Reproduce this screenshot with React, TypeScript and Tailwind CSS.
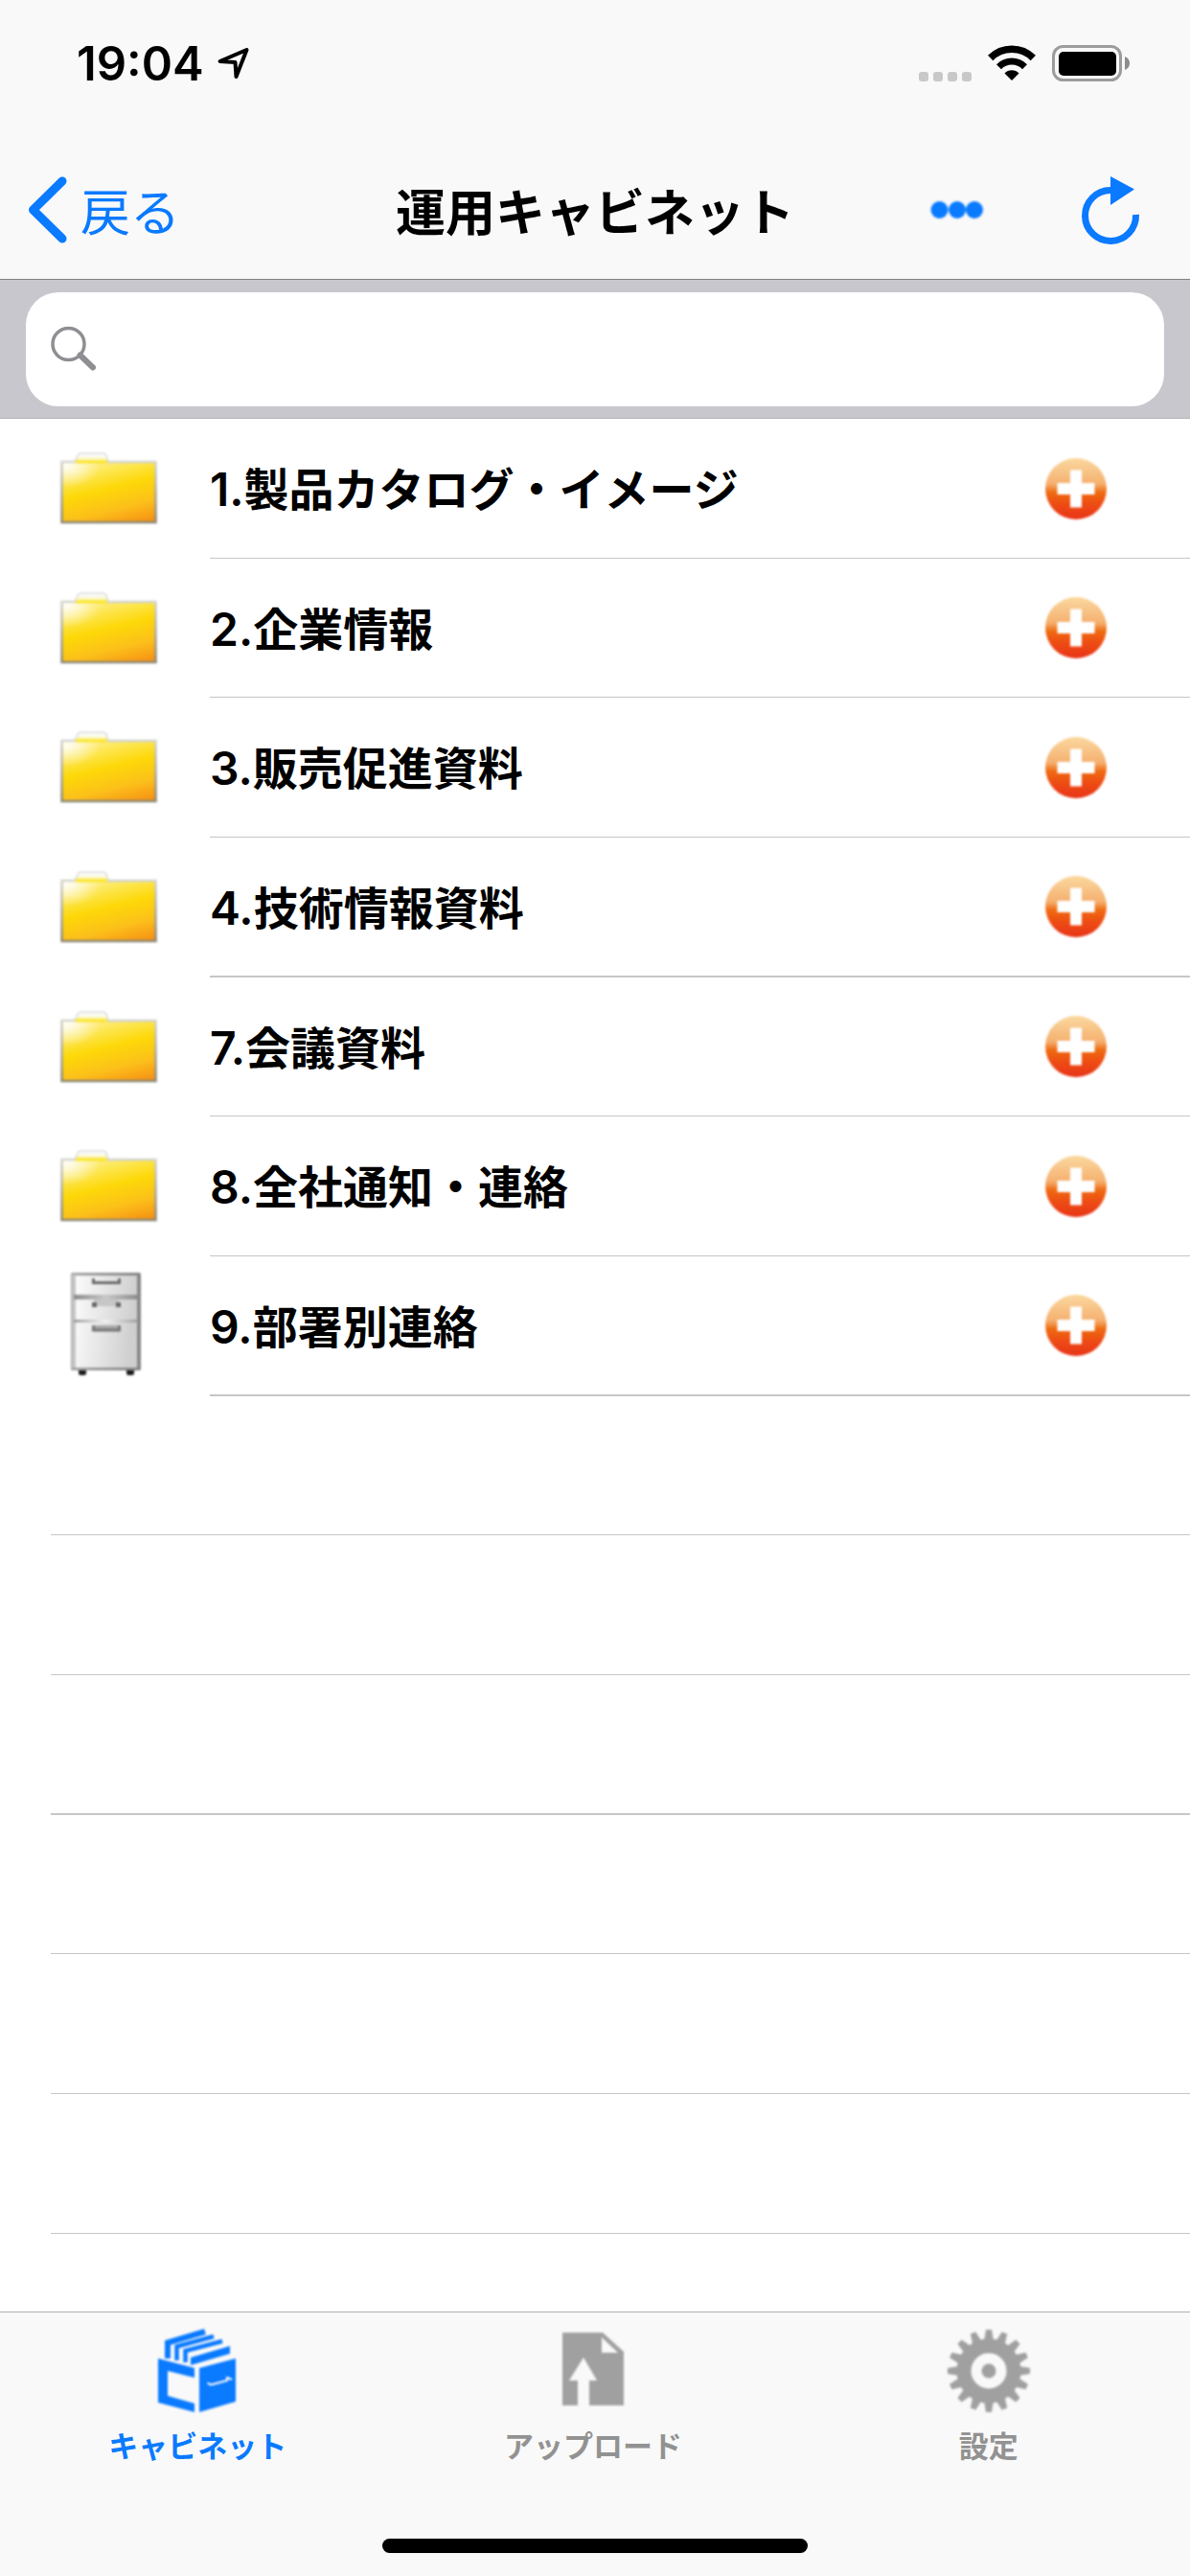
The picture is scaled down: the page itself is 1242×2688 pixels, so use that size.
import React from "react";

type Row = { no: string; name: string; kind: "folder" | "cabinet" };

const rows: Row[] = [
  { no: "1.", name: "製品カタログ・イメージ", kind: "folder" },
  { no: "2.", name: "企業情報", kind: "folder" },
  { no: "3.", name: "販売促進資料", kind: "folder" },
  { no: "4.", name: "技術情報資料", kind: "folder" },
  { no: "7.", name: "会議資料", kind: "folder" },
  { no: "8.", name: "全社通知・連絡", kind: "folder" },
  { no: "9.", name: "部署別連絡", kind: "cabinet" },
];

const emptyRows = [7, 8, 9, 10, 11, 12];

const rowHeight = (i: number) => (i % 3 === 1 ? "h-[145px]" : "h-[146px]");
const rowLine = (i: number) =>
  i > 0 && i < 12 && i % 3 === 0 ? "border-b-2 border-[#c6c6c6]" : "border-b border-[#c6c6c6]";

function Defs() {
  return (
    <svg width="0" height="0" className="absolute" aria-hidden="true">
      <defs>
        <linearGradient id="folderFill" x1="0.2" y1="0" x2="0.65" y2="1.15">
          <stop offset="0" stopColor="#fff09a" />
          <stop offset="0.2" stopColor="#fde650" />
          <stop offset="0.42" stopColor="#fdd808" />
          <stop offset="0.7" stopColor="#fcc01a" />
          <stop offset="1" stopColor="#f58a12" />
        </linearGradient>
        <radialGradient id="folderShine" cx="0.03" cy="0.05" r="0.38">
          <stop offset="0" stopColor="#fff" stopOpacity="0.9" />
          <stop offset="1" stopColor="#fff" stopOpacity="0" />
        </radialGradient>
        <linearGradient id="folderEdge" x1="0" y1="0" x2="0" y2="1">
          <stop offset="0" stopColor="#d4d4d0" />
          <stop offset="0.6" stopColor="#a8a498" />
          <stop offset="1" stopColor="#8c8878" />
        </linearGradient>
        <linearGradient id="folderTab" x1="0" y1="0" x2="0" y2="1">
          <stop offset="0.3" stopColor="#fbfbfb" />
          <stop offset="0.75" stopColor="#fdf6b0" />
          <stop offset="1" stopColor="#fde428" />
        </linearGradient>
        <linearGradient id="plusFill" x1="0" y1="0" x2="0" y2="1">
          <stop offset="0" stopColor="#fbd9a0" />
          <stop offset="0.42" stopColor="#f5b070" />
          <stop offset="0.56" stopColor="#ee6a10" />
          <stop offset="0.75" stopColor="#ee4c14" />
          <stop offset="1" stopColor="#e83418" />
        </linearGradient>
        <linearGradient id="drawer" x1="0" y1="0" x2="1" y2="0.15">
          <stop offset="0" stopColor="#fcfcfc" />
          <stop offset="1" stopColor="#cfcfcf" />
        </linearGradient>
        <linearGradient id="drawerGap" x1="0" y1="0" x2="1" y2="0">
          <stop offset="0" stopColor="#8c8c8c" />
          <stop offset="0.5" stopColor="#c8c8c8" />
          <stop offset="1" stopColor="#8c8c8c" />
        </linearGradient>
        <linearGradient id="drawerSeam" x1="0" y1="0" x2="1" y2="0">
          <stop offset="0" stopColor="#9c9c9c" />
          <stop offset="0.5" stopColor="#f4f4f4" />
          <stop offset="1" stopColor="#9c9c9c" />
        </linearGradient>
        <linearGradient id="cabinetEdge" x1="0" y1="0" x2="1" y2="0">
          <stop offset="0" stopColor="#a8a8a8" />
          <stop offset="1" stopColor="#858585" />
        </linearGradient>
      </defs>
    </svg>
  );
}

function FolderIcon() {
  return (
    <svg viewBox="0 0 110 120" className="h-[120px] w-[110px] blur-[1px]" aria-hidden="true">
      <path d="M23 32 L26 25 Q27 23 30 23 H52 Q55 23 56 25 L58 32 Z" fill="url(#folderTab)" stroke="#dcdcdc" strokeWidth="1.5" />
      <rect x="9.5" y="32" width="98" height="63" fill="url(#folderFill)" stroke="url(#folderEdge)" strokeWidth="2.5" />
      <rect x="11" y="33" width="95" height="60" fill="url(#folderShine)" />
      <path d="M24 32 H57" stroke="#fde82c" strokeWidth="3" />
    </svg>
  );
}

function CabinetIcon() {
  return (
    <svg viewBox="0 0 110 120" className="h-[120px] w-[110px] blur-[1px]" aria-hidden="true">
      <rect x="27" y="104" width="8" height="7" rx="2" fill="#1c1c1c" />
      <rect x="77" y="104" width="8" height="7" rx="2" fill="#1c1c1c" />
      <rect x="19" y="4" width="73" height="102" rx="1.5" fill="url(#cabinetEdge)" />
      <rect x="23" y="7" width="65" height="96" fill="url(#drawer)" />
      <rect x="20" y="6" width="4" height="97" fill="#c4c4c4" />
      <rect x="22" y="27" width="67" height="5" fill="url(#drawerGap)" />
      <rect x="22" y="53" width="67" height="3" fill="url(#drawerSeam)" />
      <path d="M42.500 10 V14.500 H69.500 V10" fill="none" stroke="#6c6c6c" strokeWidth="3" />
      <path d="M43 32 H69 V35 L65 39 H47 L43 35 Z" fill="#c6c6c6" />
      <rect x="41" y="35" width="5" height="5" fill="#666" />
      <rect x="66" y="35" width="5" height="5" fill="#666" />
      <path d="M42.500 59 V64 H69.500 V59" fill="#a8a8a8" stroke="#777" strokeWidth="3" />
    </svg>
  );
}

function PlusIcon() {
  return (
    <svg viewBox="0 0 72 72" className="size-[72px] blur-[1px]" aria-hidden="true">
      <circle cx="36" cy="36" r="32" fill="url(#plusFill)" />
      <path d="M30 16.500 H42 V30 H55.500 V42 H42 V55.500 H30 V42 H16.500 V30 H30 Z" fill="#fff" />
    </svg>
  );
}

function StatusBar() {
  return (
    <div className="flex h-[132px] items-center justify-between pr-[62px] pl-20">
      <div className="flex items-center gap-3.5">
        <span className="font-['Inter'] text-[49px] leading-none font-semibold">19:04</span>
        <svg viewBox="0 0 34 34" className="size-[34px]" aria-hidden="true">
          <path d="M2.500 15 L30.500 3 L19.500 31 L18.500 16 Z" fill="none" stroke="#000" strokeWidth="4" strokeLinejoin="round" />
        </svg>
      </div>
      <div className="flex items-end">
        <div className="mr-[17px] flex gap-[5px]" aria-hidden="true">
          <span className="size-2.5 rounded-[3px] bg-[#c8c8c8]" />
          <span className="size-2.5 rounded-[3px] bg-[#c8c8c8]" />
          <span className="size-2.5 rounded-[3px] bg-[#c8c8c8]" />
          <span className="size-2.5 rounded-[3px] bg-[#c8c8c8]" />
        </div>
        <svg viewBox="0 0 50 38" className="mr-[17px] h-[38px] w-[50px]" aria-hidden="true">
          <g fill="none" stroke="#000">
            <path d="M2.700 13.500 A31.500 31.500 0 0 1 47.300 13.500" strokeWidth="7.500" />
            <path d="M11.500 22.700 A19 19 0 0 1 38.500 22.700" strokeWidth="7" />
          </g>
          <path d="M25 37 L17.500 29.500 A10.500 10.500 0 0 1 32.500 29.500 Z" />
        </svg>
        <svg viewBox="0 0 82 38" className="h-[38px] w-[82px]" aria-hidden="true">
          <rect x="1.500" y="1.500" width="70" height="35" rx="10" fill="none" stroke="#9c9c9c" strokeWidth="3" />
          <rect x="7" y="7" width="60" height="25" rx="5" />
          <path d="M76 12 Q81 14 81 19 Q81 24 76 26 Z" fill="#8c8c8c" />
        </svg>
      </div>
    </div>
  );
}

function NavBar() {
  return (
    <header className="grid h-[160px] grid-cols-[1fr_auto_1fr] items-center border-b border-[#808084] pt-3.5">
      <button type="button" className="flex items-center gap-3 justify-self-start pl-7 text-[#0a7aff]">
        <svg viewBox="0 0 44 74" className="h-[74px] w-11" aria-hidden="true">
          <path d="M37 7 L6.500 37 L37 67" fill="none" stroke="currentColor" strokeWidth="9" strokeLinecap="round" strokeLinejoin="round" />
        </svg>
        <span className="text-[52px] leading-none font-normal">戻る</span>
      </button>
      <h1 className="text-[52px] leading-none font-bold">運用キャビネット</h1>
      <div className="flex items-center gap-[97px] justify-self-end pr-[48px] text-[#0a7aff]">
        <button type="button" aria-label="メニュー">
          <svg viewBox="0 0 60 24" className="h-6 w-[60px] blur-[1px]" fill="currentColor" aria-hidden="true">
            <circle cx="11.500" cy="12" r="9" />
            <circle cx="30" cy="12" r="9" />
            <circle cx="48" cy="12" r="9" />
          </svg>
        </button>
        <button type="button" aria-label="更新">
          <svg viewBox="0 0 68 74" className="h-[74px] w-[68px]" aria-hidden="true">
            <path d="M33 16.500 A26.500 26.500 0 1 0 59.500 42" fill="none" stroke="currentColor" strokeWidth="7" />
            <path d="M33 2 L58 15.500 L33 32 Z" fill="currentColor" />
          </svg>
        </button>
      </div>
    </header>
  );
}

function SearchBar() {
  return (
    <div className="border-b border-[#b4b2b6] bg-[#c9c7ce] px-[27px] pt-[13px] pb-3">
      <label className="flex h-[119px] items-center rounded-[34px] bg-white pl-6">
        <svg viewBox="0 0 52 52" className="size-13" fill="none" stroke="#8e8e93" aria-hidden="true">
          <circle cx="20.500" cy="20" r="16.500" strokeWidth="3.500" />
          <path d="M32.500 31.500 L46 44.500" strokeWidth="6" strokeLinecap="round" />
        </svg>
        <input type="search" aria-label="検索" className="h-full min-w-0 flex-1 bg-transparent px-4 text-[48px] outline-none" />
      </label>
    </div>
  );
}

function TabCabinet() {
  return (
    <svg viewBox="0 0 90 90" className="size-[90px] blur-[1px]" aria-hidden="true">
      <g fill="currentColor">
        <path d="M4 32 L42 42 V52 L14 45 V71 L42 79 V88 L4 78 Z" />
        <path d="M47 42 L85 32 V77 L47 88 Z" />
        <path d="M38 31 L79 19 V27 L38 39 Z" />
      </g>
      <g fill="none" stroke="currentColor" strokeWidth="4.500">
        <path d="M14 32 V15.500 L53 4" strokeWidth="6" />
        <path d="M23.500 34 V19.500 L62 9" />
        <path d="M32.500 36 V24 L71 14" />
      </g>
      <path d="M56 57 Q57 60 61 59 L76 55 V52 L81 54" fill="none" stroke="#f9f9f9" strokeWidth="2" />
    </svg>
  );
}

function TabUpload() {
  return (
    <svg viewBox="0 0 90 90" className="size-[90px] blur-[1px]" aria-hidden="true">
      <path
        fillRule="evenodd"
        fill="#a0a0a0"
        d="M13 5 H55 L77 25 V81 H41 V55 H49 L35 31 L20 55 H29 V81 H13 Z M54 10 V26 H71 Z"
      />
    </svg>
  );
}

const teeth = Array.from({ length: 16 }, (_, i) => i * 22.5);

function TabSettings() {
  return (
    <svg viewBox="0 0 90 90" className="size-[90px] blur-[1px]" aria-hidden="true">
      <circle cx="45" cy="45" r="26" fill="none" stroke="#a0a0a0" strokeWidth="15" />
      <circle cx="45" cy="45" r="7.500" fill="#a0a0a0" />
      {teeth.map((a) => (
        <path key={a} d="M40 14 L42 2 H48 L50 14 Z" fill="#a0a0a0" transform={`rotate(${a} 45 45)`} />
      ))}
    </svg>
  );
}

const tabs = [
  { label: "キャビネット", Icon: TabCabinet, color: "text-[#0a7aff]" },
  { label: "アップロード", Icon: TabUpload, color: "text-[#929292]" },
  { label: "設定", Icon: TabSettings, color: "text-[#929292]" },
];

export default function App() {
  return (
    <div className="flex min-h-screen flex-col bg-white font-['Noto_Sans_CJK_JP',sans-serif] text-black">
      <Defs />
      <div className="bg-[#f9f9f9]">
        <StatusBar />
        <NavBar />
      </div>
      <SearchBar />
      <main className="flex-1">
        <ul>
          {rows.map((r, i) => (
            <li key={r.no} className={`flex ${rowHeight(i)}`}>
              <div className="flex w-[219px] shrink-0 items-center pl-[55px]">
                {r.kind === "folder" ? <FolderIcon /> : <CabinetIcon />}
              </div>
              <div className={`flex flex-1 items-center justify-between pr-[83px] ${rowLine(i)}`}>
                <a href="#" className="flex items-baseline leading-none font-bold">
                  <span className="font-['Inter'] text-[48px] font-semibold">{r.no}</span>
                  <span className="text-[47px]">{r.name}</span>
                </a>
                <button type="button" aria-label={`${r.name}を追加`}>
                  <PlusIcon />
                </button>
              </div>
            </li>
          ))}
        </ul>
        <div className="pl-[53px]" aria-hidden="true">
          {emptyRows.map((i) => (
            <div key={i} className={`${rowHeight(i)} ${rowLine(i)}`} />
          ))}
        </div>
      </main>
      <footer className="border-t border-[#b0b0b2] bg-[#f9f9f9] pt-4 pb-6">
        <nav className="grid grid-cols-3 pr-1">
          {tabs.map(({ label, Icon, color }) => (
            <button key={label} type="button" className={`flex flex-col items-center gap-4 ${color}`}>
              <Icon />
              <span className="text-[31px] leading-8 font-bold">{label}</span>
            </button>
          ))}
        </nav>
        <div className="mx-auto mt-[82px] h-[15px] w-[444px] rounded-full bg-black" />
      </footer>
    </div>
  );
}
